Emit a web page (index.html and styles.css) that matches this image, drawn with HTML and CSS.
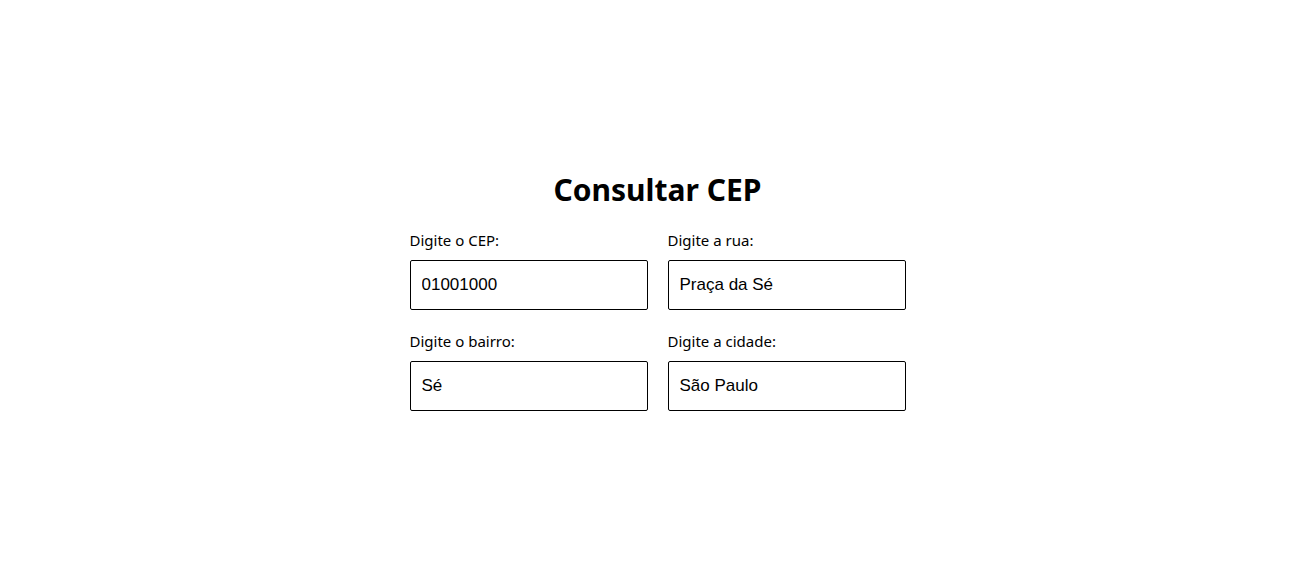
FILE: index.html
```html
<!DOCTYPE html>
<html lang="pt-BR">
<head>
<meta charset="utf-8">
<title>Consultar CEP</title>
<link rel="stylesheet" href="styles.css">
</head>
<body>
<main class="page">
  <section class="card">
    <h1 class="title">Consultar CEP</h1>
    <form class="form">
      <div class="field">
        <label class="label" for="cep">Digite o CEP:</label>
        <input class="input" id="cep" type="text" value="01001000">
      </div>
      <div class="field">
        <label class="label" for="rua">Digite a rua:</label>
        <input class="input" id="rua" type="text" value="Praça da Sé">
      </div>
      <div class="field">
        <label class="label" for="bairro">Digite o bairro:</label>
        <input class="input" id="bairro" type="text" value="Sé">
      </div>
      <div class="field">
        <label class="label" for="cidade">Digite a cidade:</label>
        <input class="input" id="cidade" type="text" value="São Paulo">
      </div>
    </form>
  </section>
</main>
</body>
</html>
```

FILE: styles.css
```css
* { box-sizing: border-box; }
html, body { margin: 0; padding: 0; background: #fff; }
body {
  font-family: "Noto Sans", "Open Sans", sans-serif;
  color: #000;
}
.page {
  min-height: 100vh;
  display: flex;
  align-items: center;
  justify-content: center;
}
.card {
  display: flex;
  flex-direction: column;
  align-items: center;
}
.title {
  margin: 0 0 20px;
  font-size: 30px;
  font-weight: 700;
  line-height: 40px;
}
.form {
  display: grid;
  grid-template-columns: 238px 238px;
  column-gap: 20px;
  row-gap: 21px;
}
.field {
  display: flex;
  flex-direction: column;
  gap: 10px;
}
.label {
  font-size: 15px;
  line-height: 20px;
}
.input {
  width: 238px;
  height: 50px;
  border: 1px solid #000;
  border-radius: 2px;
  padding: 0 10px 0 11px;
  font-family: "Liberation Sans", Arial, sans-serif;
  font-size: 17px;
  color: #000;
  outline: none;
}
```
